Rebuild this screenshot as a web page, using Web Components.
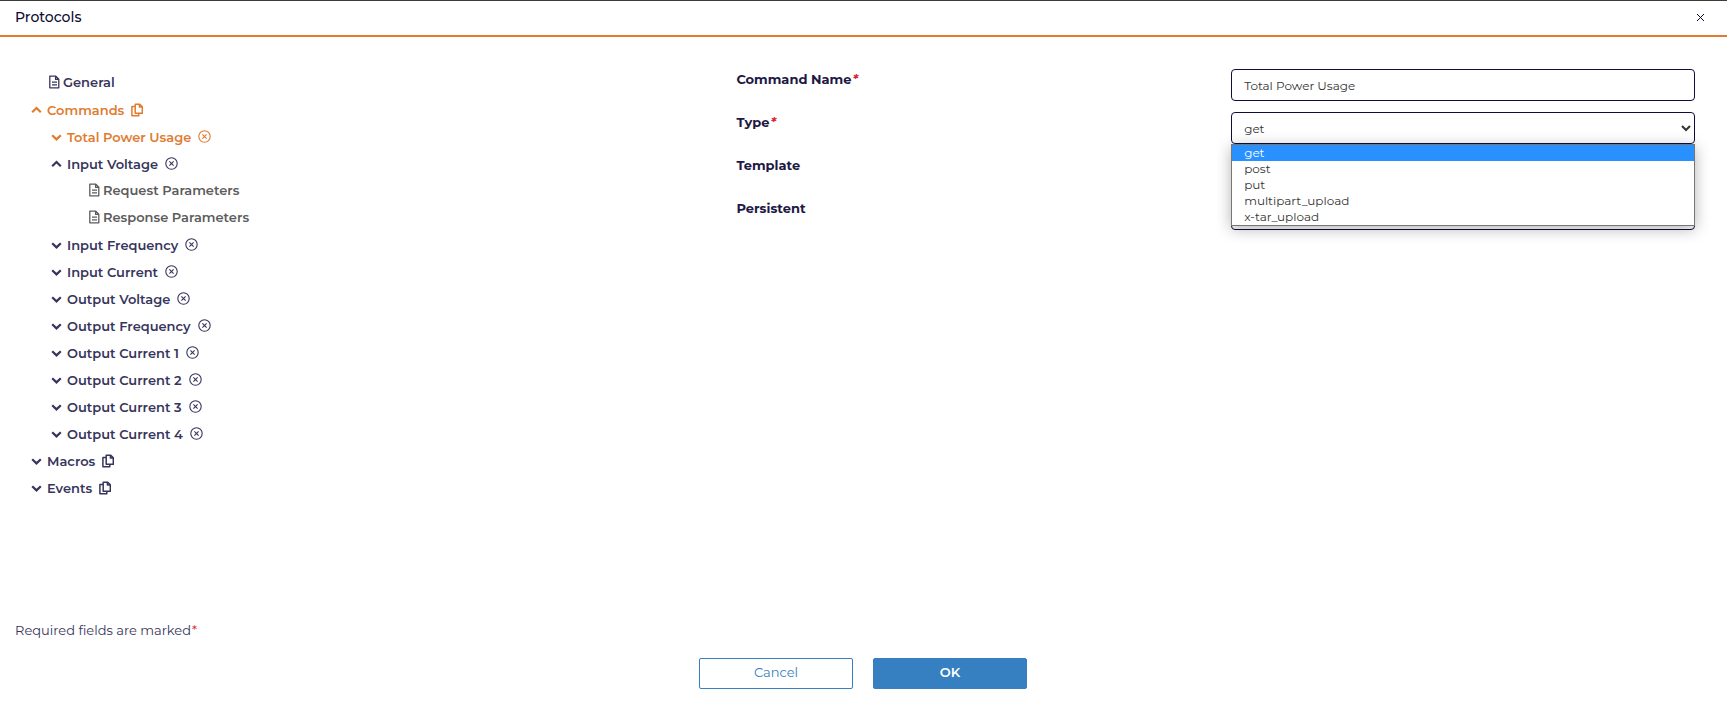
<!DOCTYPE html>
<html lang="en">
<head>
    <meta charset="UTF-8">
    <meta name="viewport" content="width=device-width, initial-scale=1.0">
    <title>Protocols</title>
    <style>
        body {
            margin: 0;
            font-family: Montserrat, Inter, "Liberation Sans", sans-serif;
            font-size: 13px;
            color: #0e0a33;
            background: #fff;

            --accent: #e17b2f;
            --tree: #37355c;
            --primary: #367fc0;
            --border: #110d38;
            --required: #e0202c;
        }
    </style>
</head>
<body>
<protocol-dialog heading="Protocols">
    <protocol-tree slot="tree">
        <tree-leaf>General</tree-leaf>
        <tree-branch label="Commands" action="copy" open active>
            <tree-branch label="Total Power Usage" action="remove" active></tree-branch>
            <tree-branch label="Input Voltage" action="remove" open>
                <tree-leaf muted>Request Parameters</tree-leaf>
                <tree-leaf muted>Response Parameters</tree-leaf>
            </tree-branch>
            <tree-branch label="Input Frequency" action="remove"></tree-branch>
            <tree-branch label="Input Current" action="remove"></tree-branch>
            <tree-branch label="Output Voltage" action="remove"></tree-branch>
            <tree-branch label="Output Frequency" action="remove"></tree-branch>
            <tree-branch label="Output Current 1" action="remove"></tree-branch>
            <tree-branch label="Output Current 2" action="remove"></tree-branch>
            <tree-branch label="Output Current 3" action="remove"></tree-branch>
            <tree-branch label="Output Current 4" action="remove"></tree-branch>
        </tree-branch>
        <tree-branch label="Macros" action="copy"></tree-branch>
        <tree-branch label="Events" action="copy"></tree-branch>
    </protocol-tree>

    <text-field slot="form" label="Command Name" value="Total Power Usage" required></text-field>
    <select-field slot="form" label="Type" options="get,post,put,multipart_upload,x-tar_upload" required open></select-field>
    <text-field slot="form" label="Template"></text-field>
    <select-field slot="form" label="Persistent" options=""></select-field>

    <dialog-button slot="actions">Cancel</dialog-button>
    <dialog-button slot="actions" primary>OK</dialog-button>
</protocol-dialog>

<script>
    const icons = {
        up: '<svg width="11" height="9" viewBox="0 0 11 9"><path d="M1.2 7.2 5.5 3l4.3 4.2" fill="none" stroke="currentColor" stroke-width="2.2"/></svg>',
        down: '<svg width="11" height="9" viewBox="0 0 11 9"><path d="M1.2 3.2l4.3 4.2 4.3-4.2" fill="none" stroke="currentColor" stroke-width="2.2"/></svg>',
        file: '<svg width="11" height="14" viewBox="0 0 11 14"><path d="M.8 1.2h6l3 3v8.6h-9zM6.6 1.2v3.2h3.2M3 7.2h5M3 9.8h5" fill="none" stroke="currentColor" stroke-width="1.3" stroke-linejoin="round"/></svg>',
        copy: '<svg width="12" height="14" viewBox="0 0 12 14"><path d="M4.2 1.2h4.6l2.5 2.5v6.6H4.2zM8.4 1.2v2.9h2.9M3.8 3.5H.9v9.3h6.9v-2" fill="none" stroke="currentColor" stroke-width="1.5" stroke-linejoin="round"/></svg>',
        remove: '<svg width="13" height="13" viewBox="0 0 13 13"><circle cx="6.5" cy="6.5" r="5.7" fill="none" stroke="currentColor" stroke-width="1.1"/><path d="M4.4 4.4l4.2 4.2M8.6 4.4 4.4 8.6" stroke="currentColor" stroke-width="1.1"/></svg>',
        close: '<svg width="9" height="9" viewBox="0 0 9 9"><path d="M1 1l7 7M8 1 1 8" stroke="currentColor"/></svg>'
    };

    // Reset shared by every element that draws its own controls
    const base = `
        *, *::before { box-sizing: border-box; }
        button, input, select { font: inherit; color: inherit; margin: 0; }
        button { padding: 0; border: 0; background: none; cursor: pointer; }
        svg { display: block; flex: none; }
    `;

    class ProtocolDialog extends HTMLElement {
        constructor() {
            super();
            const shadow = this.attachShadow({mode: 'open'});
            shadow.innerHTML = `
                <style>
                    ${base}
                    :host {
                        display: flex;
                        flex-direction: column;
                        box-sizing: border-box;
                        min-height: 100vh;
                        border-top: 1px solid #3c3c3c;
                    }
                    header {
                        display: flex;
                        align-items: center;
                        justify-content: space-between;
                        height: 36px;
                        padding: 0 20px 2px 15px;
                        border-bottom: 2px solid var(--accent);
                    }
                    h1 { margin: 0; font-size: 14px; font-weight: 500; line-height: 20px; }
                    .close { padding: 2px; }
                    main {
                        flex: 1;
                        display: grid;
                        grid-template-columns: 73fr 97fr;
                        align-items: start;
                        padding: 32px 32px 24px 15px;
                    }
                    form { display: grid; gap: 11px; }
                    footer { padding: 0 16px 32px 15px; }
                    p { margin: 0 0 18px; line-height: 20px; color: #37355c; }
                    p span { color: var(--required); margin-left: 1px; }
                    .actions { display: flex; justify-content: center; gap: 20px; }
                </style>
                <header>
                    <h1></h1>
                    <button class="close" type="button" aria-label="Close">${icons.close}</button>
                </header>
                <main>
                    <slot name="tree"></slot>
                    <form><slot name="form"></slot></form>
                </main>
                <footer>
                    <p>Required fields are marked<span>*</span></p>
                    <div class="actions"><slot name="actions"></slot></div>
                </footer>
            `;
            shadow.querySelector('h1').textContent = this.getAttribute('heading');
        }
    }

    class ProtocolTree extends HTMLElement {
        constructor() {
            super();
            this.attachShadow({mode: 'open'}).innerHTML = `
                <style>
                    :host { display: block; padding-left: 16px; font-weight: 600; color: var(--tree); }
                </style>
                <slot></slot>
            `;
        }
    }

    class TreeLeaf extends HTMLElement {
        constructor() {
            super();
            this.attachShadow({mode: 'open'}).innerHTML = `
                <style>
                    ${base}
                    :host { display: block; padding-left: 18px; color: var(--tree); }
                    :host([muted]) { color: #5c5c5c; }
                    button { display: flex; align-items: center; gap: 3px; height: 27px; padding-bottom: 2px; }
                </style>
                <button type="button">${icons.file}<span><slot></slot></span></button>
            `;
        }
    }

    class TreeBranch extends HTMLElement {
        constructor() {
            super();
            const shadow = this.attachShadow({mode: 'open'});
            const open = this.hasAttribute('open');
            const action = this.getAttribute('action');
            shadow.innerHTML = `
                <style>
                    ${base}
                    :host { display: block; color: var(--tree); }
                    :host([active]) { color: var(--accent); }
                    .row { display: flex; align-items: center; gap: 7px; height: 27px; }
                    .toggle { display: flex; align-items: center; gap: 5px; }
                    .children { padding-left: 20px; }
                    .children[hidden] { display: none; }
                </style>
                <div class="row">
                    <button class="toggle" type="button" aria-expanded="${open}">
                        ${open ? icons.up : icons.down}<span class="label"></span>
                    </button>
                    <button type="button" aria-label="${action}">${icons[action]}</button>
                </div>
                <div class="children" ${open ? '' : 'hidden'}><slot></slot></div>
            `;
            shadow.querySelector('.label').textContent = this.getAttribute('label');
        }
    }

    // Label on the left, control on the right
    const fieldStyle = `
        ${base}
        :host { display: grid; grid-template-columns: 16fr 15fr; align-items: start; }
        label { font-weight: 700; line-height: 20px; color: #1d1944; }
        label i { color: var(--required); margin-left: 1px; }
        .control { position: relative; }
        input, select {
            display: block;
            width: 100%;
            height: 32px;
            border: 1px solid var(--border);
            border-radius: 4px;
            background: #fff;
            font-size: 12px;
            color: #333;
        }
        input { padding: 0 12px; }
        select { padding: 0 0 0 8px; }
    `;

    class TextField extends HTMLElement {
        constructor() {
            super();
            const shadow = this.attachShadow({mode: 'open'});
            shadow.innerHTML = `
                <style>${fieldStyle}</style>
                <label for="field">${this.getAttribute('label')}${this.hasAttribute('required') ? '<i>*</i>' : ''}</label>
                <div class="control"><input id="field" type="text"></div>
            `;
            shadow.querySelector('input').value = this.getAttribute('value') || '';
        }
    }

    class SelectField extends HTMLElement {
        constructor() {
            super();
            const options = this.getAttribute('options').split(',');
            this.attachShadow({mode: 'open'}).innerHTML = `
                <style>
                    ${fieldStyle}
                    ul {
                        position: absolute;
                        z-index: 1;
                        top: 100%;
                        left: 0;
                        right: 0;
                        margin: 0;
                        padding: 0;
                        list-style: none;
                        border: 1px solid #767676;
                        background: #fff;
                        box-shadow: 0 3px 14px rgba(0, 0, 0, .3);
                        font-size: 12px;
                        color: #333;
                    }
                    li { padding: 0 12px; line-height: 16px; }
                    li[aria-selected=true] { background: #2890ff; color: #fff; }
                </style>
                <label for="field">${this.getAttribute('label')}${this.hasAttribute('required') ? '<i>*</i>' : ''}</label>
                <div class="control">
                    <select id="field">${options.map(o => `<option>${o}</option>`).join('')}</select>
                    ${this.hasAttribute('open') ? `<ul role="listbox">${options.map((o, i) => `<li role="option" aria-selected="${i === 0}">${o}</li>`).join('')}</ul>` : ''}
                </div>
            `;
        }
    }

    class DialogButton extends HTMLElement {
        constructor() {
            super();
            this.attachShadow({mode: 'open'}).innerHTML = `
                <style>
                    ${base}
                    :host { display: block; }
                    button {
                        width: 154px;
                        height: 31px;
                        padding-bottom: 3px;
                        border: 1px solid var(--primary);
                        border-radius: 2px;
                        color: var(--primary);
                        font-size: 13px;
                    }
                    :host([primary]) button { background: var(--primary); color: #fff; font-weight: 600; }
                </style>
                <button type="button"><slot></slot></button>
            `;
        }
    }

    customElements.define('protocol-dialog', ProtocolDialog);
    customElements.define('protocol-tree', ProtocolTree);
    customElements.define('tree-leaf', TreeLeaf);
    customElements.define('tree-branch', TreeBranch);
    customElements.define('text-field', TextField);
    customElements.define('select-field', SelectField);
    customElements.define('dialog-button', DialogButton);
</script>
</body>
</html>
